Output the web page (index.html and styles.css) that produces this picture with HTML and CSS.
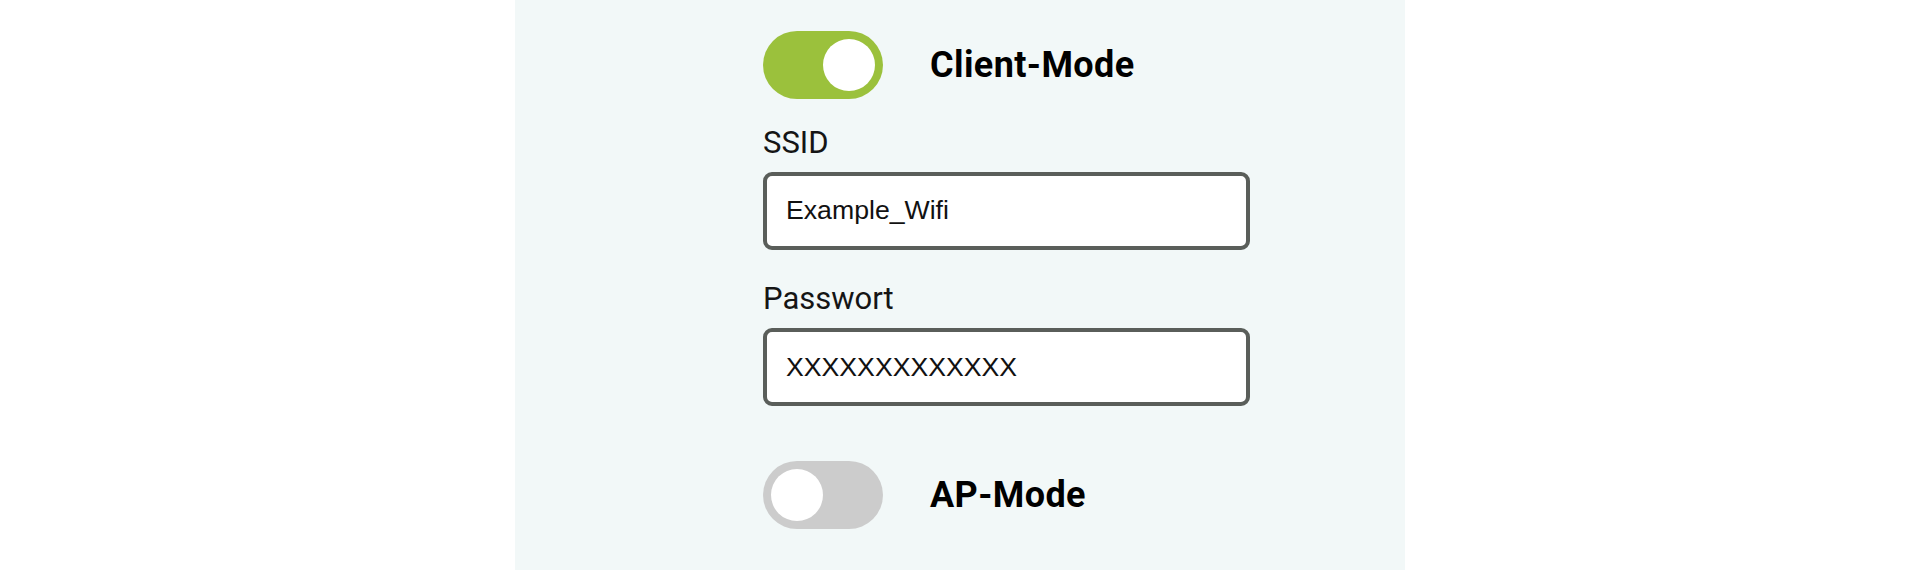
FILE: index.html
```html
<!DOCTYPE html>
<html lang="de">
<head>
<meta charset="utf-8">
<title>WLAN-Einstellungen</title>
<link rel="stylesheet" href="styles.css">
</head>
<body>
<main class="page">
  <section class="panel">
    <div class="mode-row">
      <span class="switch switch-on"><span class="knob"></span></span>
      <span class="mode-title">Client-Mode</span>
    </div>
    <label class="field-label first" for="ssid">SSID</label>
    <input class="field" id="ssid" type="text" value="Example_Wifi">
    <label class="field-label" for="pw">Passwort</label>
    <input class="field" id="pw" type="text" value="XXXXXXXXXXXXX">
    <div class="mode-row ap-row">
      <span class="switch"><span class="knob"></span></span>
      <span class="mode-title">AP-Mode</span>
    </div>
  </section>
</main>
</body>
</html>
```
FILE: styles.css
```css
html, body {
  margin: 0;
  padding: 0;
  background: #ffffff;
}

body {
  font-family: Roboto, "Noto Sans", sans-serif;
  color: #111111;
  overflow: hidden;
}

.page {
  display: flex;
  height: 570px;
}

.panel {
  margin-left: 515px;
  width: 890px;
  height: 570px;
  box-sizing: border-box;
  background: #f2f8f8;
  padding: 31px 0 0 248px;
  display: flex;
  flex-direction: column;
  align-items: flex-start;
}

.mode-row {
  display: flex;
  align-items: center;
  gap: 47px;
}

.ap-row {
  margin-top: 55px;
}

.switch {
  width: 120px;
  height: 68px;
  border-radius: 34px;
  background: #cccccc;
  box-sizing: border-box;
  padding: 0 8px;
  display: flex;
  align-items: center;
  justify-content: flex-start;
}

.switch-on {
  background: #9bc13c;
  justify-content: flex-end;
}

.knob {
  width: 52px;
  height: 52px;
  border-radius: 50%;
  background: #ffffff;
}

.mode-title {
  font-family: Roboto, "Noto Sans", sans-serif;
  font-weight: 700;
  font-size: 36px;
  letter-spacing: 0.4px;
  color: #000000;
}

.field-label {
  display: block;
  font-size: 31px;
  line-height: 35px;
  color: #151515;
  margin-top: 31.5px;
}

.field-label.first {
  margin-top: 25.5px;
}

.field {
  display: block;
  width: 487px;
  height: 78px;
  box-sizing: border-box;
  margin: 12px 0 0 0;
  border: 4px solid #5a5e5a;
  border-radius: 9px;
  background: #ffffff;
  padding: 0 0 0 19px;
  font-family: "Liberation Sans", Arial, sans-serif;
  font-size: 26.67px;
  color: #111111;
  outline: none;
}
```
